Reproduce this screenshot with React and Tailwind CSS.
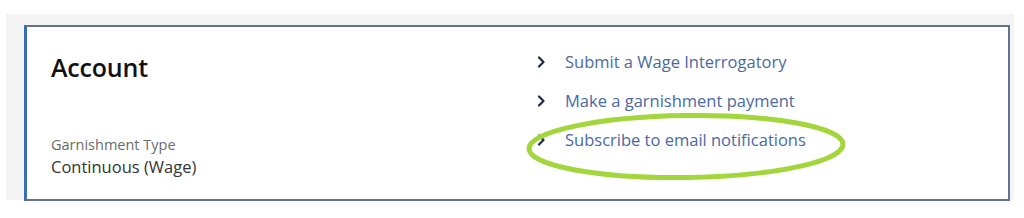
import React from "react";

function Chevron() {
  return (
    <svg width="9" height="12" viewBox="0 0 9 12" className="shrink-0">
      <path d="M2 1.5 L6.5 6 L2 10.5" fill="none" stroke="#1e2b45" strokeWidth="2.2" strokeLinecap="round" strokeLinejoin="round" />
    </svg>
  );
}

export default function App() {
  const links = ["Submit a Wage Interrogatory", "Make a garnishment payment", "Subscribe to email notifications"];
  return (
    <div className="w-[1024px] h-[218px] bg-white relative" style={{ fontFamily: '"Open Sans", "Noto Sans", sans-serif' }}>
      <div className="absolute left-[6px] top-[14px] w-[1008px] h-[186px] bg-[#f4f4f4]" />
      <div className="relative pl-[24px] pt-[25px]">
        <div className="w-[986px] h-[176px] bg-white border-[2px] border-[#64728e] border-l-[3px] border-l-[#3a6db5] flex">
          <div className="w-[510px] pl-[24px] pt-[24px] flex flex-col">
            <div className="text-[25px] font-semibold leading-[32px] text-[#111] tracking-[-0.2px]">Account</div>
            <div className="mt-[53px] text-[14.5px] leading-[18px] text-[#6b6b6b]">Garnishment Type</div>
            <div className="mt-[2px] text-[16.5px] leading-[22px] text-[#333]">Continuous (Wage)</div>
          </div>
          <div className="flex flex-col pt-[24px] gap-[17px]">
            {links.map((t) => (
              <div key={t} className="flex items-center gap-[19px] h-[22px]">
                <Chevron />
                <span className="text-[16.5px] leading-[22px] text-[#4a69a3]">{t}</span>
              </div>
            ))}
          </div>
        </div>
      </div>
      <svg className="absolute left-0 top-0 pointer-events-none" width="1024" height="218">
        <ellipse cx="686" cy="146.5" rx="157" ry="31" fill="none" stroke="#a2d63a" strokeWidth="5" transform="rotate(-0.8 686 146.5)" />
      </svg>
    </div>
  );
}
